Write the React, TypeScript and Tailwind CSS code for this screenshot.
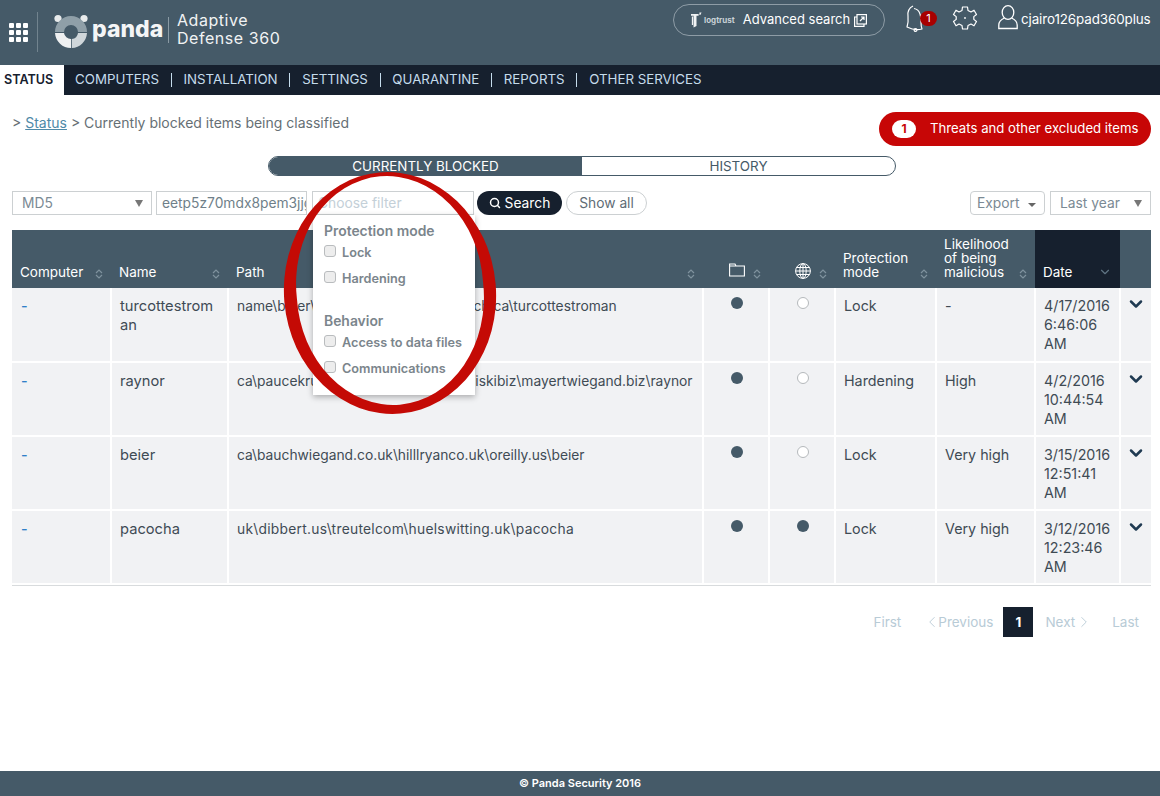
import { ChevronDown, ChevronLeft, ChevronRight, Search } from 'lucide-react'

const font = "font-['Inter','Liberation_Sans',sans-serif]"

const navItems = ['COMPUTERS', 'INSTALLATION', 'SETTINGS', 'QUARANTINE', 'REPORTS', 'OTHER SERVICES']

const rows = [
  { name: ['turcottestrom', 'an'], path: 'name\\beier\\hillryan.uk\\oreilly.us\\bosch.ca\\turcottestroman', pathClass: '', folder: true, web: false, mode: 'Lock', risk: '-', date: ['4/17/2016', '6:46:06', 'AM'] },
  { name: ['raynor'], path: 'ca\\paucekrunolfsdottir.us\\kuhlanbogiskibiz\\mayertwiegand.biz\\raynor', pathClass: '', folder: true, web: false, mode: 'Hardening', risk: 'High', date: ['4/2/2016', '10:44:54', 'AM'] },
  { name: ['beier'], path: 'ca\\bauchwiegand.co.uk\\hilllryanco.uk\\oreilly.us\\beier', pathClass: '', folder: true, web: false, mode: 'Lock', risk: 'Very high', date: ['3/15/2016', '12:51:41', 'AM'] },
  { name: ['pacocha'], path: 'uk\\dibbert.us\\treutelcom\\huelswitting.uk\\pacocha', pathClass: 'tracking-[0.27px]', folder: true, web: true, mode: 'Lock', risk: 'Very high', date: ['3/12/2016', '12:23:46', 'AM'] },
]

function SortIcon() {
  return (
    <svg width="8" height="10" viewBox="0 0 8 10" fill="none" stroke="#7f929e" strokeWidth="1.2" className="shrink-0">
      <path d="M1 4 L4 1 L7 4" />
      <path d="M1 6 L4 9 L7 6" />
    </svg>
  )
}

function PandaLogo() {
  return (
    <svg width="36" height="34" viewBox="0 0 36 34">
      <circle cx="5" cy="4.5" r="3.6" fill="#e8ebec" />
      <circle cx="31" cy="4.5" r="3.6" fill="#e8ebec" />
      <path d="M18 2 A16 16 0 0 1 34 18 H25 A7 7 0 0 0 11 18 H2 A16 16 0 0 1 18 2 Z" fill="#8f9fa8" />
      <path d="M2 19 H11 A7 7 0 0 0 18 25 V34 A16 16 0 0 1 2 19 Z" fill="#eef0f1" />
      <path d="M34 19 H25 A7 7 0 0 1 18.8 25 V34 A16 16 0 0 0 34 19 Z" fill="#cfd6da" />
    </svg>
  )
}

function LogTrust() {
  return (
    <span className="flex items-center gap-[2px]">
      <svg width="11" height="18" viewBox="0 0 13 18" fill="#f1f3f4">
        <path d="M0 2 H9 V4 H6.5 V16 L3 18 V4 H0 Z M1 5 H2.4 V15 H1 Z" />
        <path d="M10 0 H12.5 L11 3 H10 Z" />
      </svg>
      <span className="text-[8px] font-bold text-[#c9d1d6]">logtrust</span>
    </span>
  )
}

function GearIcon() {
  return (
    <svg width="26" height="26" viewBox="0 0 26 26" fill="none" stroke="white" strokeWidth="1.2" strokeLinejoin="round">
      <path d="M10.5 2 L15.5 2 L16 5.5 L19 7 L22 5.2 L24.5 9.5 L21.8 11.6 L21.8 14.4 L24.5 16.5 L22 20.8 L19 19 L16 20.5 L15.5 24 L10.5 24 L10 20.5 L7 19 L4 20.8 L1.5 16.5 L4.2 14.4 L4.2 11.6 L1.5 9.5 L4 5.2 L7 7 L10 5.5 Z" />
      <circle cx="13" cy="13" r="0.9" fill="white" stroke="none" />
    </svg>
  )
}

function UserIcon() {
  return (
    <svg width="20" height="25" viewBox="0 0 20 25" fill="none" stroke="white" strokeWidth="1.3">
      <ellipse cx="10" cy="7.5" rx="5.8" ry="6.8" />
      <path d="M6.5 13 C3 14.5 0.8 16.5 0.8 20 V23.5 H19.2 V20 C19.2 16.5 17 14.5 13.5 13" />
    </svg>
  )
}

function BellIcon() {
  return (
    <svg width="20" height="27" viewBox="0 0 20 27" fill="none" stroke="white" strokeWidth="1.2" strokeLinejoin="round">
      <path d="M7 1 C3 3 1.5 7 2 11 C2.4 15 2 19 1 22 C7 25 12 25 16 24 C14 20 16 14 14 9 C13 6 11 4 8 3.5" />
      <circle cx="9.5" cy="25" r="1.4" />
    </svg>
  )
}

function Dot({ on }: { on: boolean }) {
  return on ? (
    <span className="block h-3 w-3 rounded-full bg-[#455a68]" />
  ) : (
    <span className="block h-3 w-3 rounded-full border border-[#b5b9bc] bg-white" />
  )
}

function Check({ label }: { label: string }) {
  return (
    <div className="flex h-[26px] items-start gap-[6px]">
      <span className="mt-[-1px] h-3 w-3 shrink-0 rounded-[3px] border border-[#b9bcbe] bg-[#ededed]" />
      <span className="text-[12.7px] leading-[14px] font-semibold whitespace-nowrap text-[#7b858c]">{label}</span>
    </div>
  )
}

function SelectBox({ label, className }: { label: string; className: string }) {
  return (
    <div className={`flex h-6 items-center justify-between border border-[#ccd0d2] pr-2 pl-[9px] text-[13.8px] text-[#7b8a94] ${className}`}>
      <span>{label}</span>
      <span className="border-x-[4px] border-t-[7px] border-x-transparent border-t-[#777]" />
    </div>
  )
}

export default function App() {
  return (
    <div className={`relative flex min-h-[796px] flex-col overflow-hidden bg-white ${font}`}>
      {/* Header */}
      <header className="flex h-[65px] items-start bg-[#455a68] text-white">
        <div className="mt-[12px] flex h-[40px] w-[38px] items-center justify-center border-r border-[#71838e]">
          <div className="mr-[1px] grid grid-cols-3 gap-[2px]">
            {Array.from({ length: 9 }).map((_, i) => (
              <span key={i} className="h-[5px] w-[5px] rounded-[1px] bg-white" />
            ))}
          </div>
        </div>
        <div className="mt-[14px] ml-[15px]"><PandaLogo /></div>
        <span className="mt-[12px] ml-[3px] w-[71px] text-[23px] leading-[34px] font-extrabold whitespace-nowrap text-[#f4f5f6]">panda</span>
        <div className="mt-[17px] ml-[5px] h-[26px] w-px bg-[#8a9aa4]" />
        <div className="mt-[11px] ml-[8px] text-[16px] leading-[18px] tracking-[0.55px] text-[#f1f3f4]">
          <div>Adaptive</div>
          <div>Defense 360</div>
        </div>
        <div className="absolute top-[4px] left-[673px] flex h-[32px] w-[212px] items-center rounded-full border border-[#8e9ca6] pl-[17px]">
          <LogTrust />
          <span className="ml-2 text-[13px] whitespace-nowrap">Advanced search</span>
          <svg width="13" height="13" viewBox="0 0 13 13" fill="none" stroke="white" strokeWidth="1.2" className="ml-[4px] shrink-0">
            <rect x="3" y="0.6" width="9.4" height="9.4" />
            <path d="M3 3 H0.6 V12.4 H10 V10 M6 7 L10 3 M7 3 H10 V6" />
          </svg>
        </div>
        <div className="absolute top-[5px] left-[906px] h-7 w-8">
          <BellIcon />
          <span className="absolute top-[6px] left-[14px] flex h-[15px] w-[17px] items-center justify-center rounded-full bg-[#a80000] text-[11px]">1</span>
        </div>
        <div className="absolute top-[5px] left-[952px]"><GearIcon /></div>
        <div className="absolute top-[5px] left-[998px]"><UserIcon /></div>
        <span className="absolute top-[10px] left-[1021px] w-[131px] text-[13.4px] leading-[18px] tracking-[-0.1px] whitespace-nowrap">cjairo126pad360plus</span>
      </header>

      {/* Nav */}
      <nav className="flex h-[30px] items-center bg-[#16202e] text-[13.3px] text-[#c5dcec]">
        <span className="flex h-full w-[64px] items-center bg-white pl-1 text-[12.6px] font-semibold text-[#16202e]">STATUS</span>
        <div className="ml-[11px] flex items-center">
          {navItems.map((item, i) => (
            <span key={item} className="flex items-center">
              <span>{item}</span>
              {i < navItems.length - 1 && <span className="mx-[11.75px] h-[14px] w-px bg-[#c5dcec]" />}
            </span>
          ))}
        </div>
      </nav>

      {/* Breadcrumb + red pill */}
      <div className="flex items-start justify-between px-[9px] pt-[17px] pl-3">
        <p className="mt-[1px] text-[14px] leading-5 text-[#666f75]">
          &gt; <span className="text-[#4f8aa8] underline">Status</span> &gt; Currently blocked items being classified
        </p>
        <div className="flex h-[34px] w-[272px] items-center rounded-full bg-[#c70606] pl-[13px] text-[13.2px] text-white">
          <span className="flex h-[18px] w-6 items-center justify-center rounded-full bg-white text-xs font-bold text-[#c70606]">1</span>
          <span className="ml-[14px] whitespace-nowrap">Threats and other excluded items</span>
        </div>
      </div>

      {/* Tabs */}
      <div className="mt-[10px] ml-[268px] flex h-5 w-[628px] overflow-hidden rounded-full border border-[#455a68] text-[13.4px]">
        <div className="flex w-[313px] items-center justify-center bg-[#455a68] text-white">CURRENTLY BLOCKED</div>
        <div className="flex flex-1 items-center justify-center text-[#455a68]">HISTORY</div>
      </div>

      {/* Filters */}
      <div className="mt-[15px] flex items-center px-[9px] pl-3">
        <SelectBox label="MD5" className="w-[140px]" />
        <div className="ml-1 flex h-6 w-[151px] items-center overflow-hidden border border-[#ccd0d2] pl-[5px] text-[13.8px] whitespace-nowrap text-[#6f7f89]">
          eetp5z70mdx8pem3jjg
        </div>
        <div className="relative ml-[5px] h-6 w-[162px] border border-[#ccd0d2] pl-[5px] text-[13.8px] leading-[22px] text-[#c4d0d8]">
          Choose filter
          <div className="absolute top-[23px] left-0 z-10 h-[180px] w-[162px] bg-white pt-[8px] pl-[11px] shadow-[0_2px_6px_rgba(0,0,0,0.3)]">
            <div className="mb-[7px] text-[13.9px] leading-4 font-semibold text-[#7b858c]">Protection mode</div>
            <Check label="Lock" />
            <Check label="Hardening" />
            <div className="mt-[15px] mb-[7px] text-[13.9px] leading-4 font-semibold text-[#7b858c]">Behavior</div>
            <Check label="Access to data files" />
            <Check label="Communications" />
          </div>
        </div>
        <button className="ml-[3px] flex h-6 w-[85px] items-center justify-center gap-1 rounded-full bg-[#16202e] text-[13.8px] text-white">
          <Search size={12} strokeWidth={3} />
          Search
        </button>
        <button className="ml-1 h-6 w-[81px] rounded-full border border-[#ccd0d2] text-[13.8px] text-[#5f6c75]">Show all</button>
        <div className="ml-auto flex h-6 w-[75px] items-center justify-between rounded-[4px] border border-[#ccd0d2] pr-[8px] pl-[6px] text-[13.8px] text-[#7b8a94]">
          Export
          <span className="mt-[3px] border-x-[4px] border-t-[4px] border-x-transparent border-t-[#666]" />
        </div>
        <SelectBox label="Last year" className="ml-[5px] w-[101px]" />
      </div>

      {/* Table */}
      <div className="mt-[15px] px-[9px] pl-3">
        <table className="w-[1139px] table-fixed border-collapse text-[14.3px]">
          <thead>
            <tr className="h-[58px] bg-[#455a68] text-left text-[13.5px] leading-[14px] text-white">
              {[
                ['Computer', 'w-[99px]'],
                ['Name', 'w-[117px]'],
                ['Path', 'w-[475px]'],
              ].map(([label, w]) => (
                <th key={label} className={`${w} p-0 align-bottom font-normal`}>
                  <div className="mb-[9px] flex items-end justify-between pr-2 pl-2">
                    <span>{label}</span>
                    <SortIcon />
                  </div>
                </th>
              ))}
              <th className="w-[66px] p-0 align-bottom">
                <div className="mb-[9px] flex items-end justify-center gap-[8px] pl-[18px]">
                  <svg width="16" height="14" viewBox="0 0 16 14" fill="none" stroke="white" strokeWidth="1.1" className="mb-[2px]">
                    <path d="M0.6 1 H6 L7 3 H15.4 V13 H0.6 Z M0.6 3 H7" />
                  </svg>
                  <SortIcon />
                </div>
              </th>
              <th className="w-[66px] p-0 align-bottom">
                <div className="mb-[9px] flex items-end justify-center gap-[8px] pl-[17px]">
                  <svg width="16" height="16" viewBox="0 0 16 16" fill="none" stroke="white" strokeWidth="1">
                    <circle cx="8" cy="8" r="7.4" />
                    <ellipse cx="8" cy="8" rx="3.2" ry="7.4" />
                    <path d="M8 0.6 V15.4 M0.6 8 H15.4 M1.8 4.5 H14.2 M1.8 11.5 H14.2" />
                  </svg>
                  <SortIcon />
                </div>
              </th>
              <th className="w-[101px] p-0 align-bottom font-normal">
                <div className="mb-[9px] flex items-end justify-between pr-2 pl-2">
                  <span>Protection<br />mode</span>
                  <SortIcon />
                </div>
              </th>
              <th className="w-[99px] p-0 align-bottom font-normal">
                <div className="mb-[9px] flex items-end justify-between pr-2 pl-2">
                  <span>Likelihood<br />of being<br />malicious</span>
                  <SortIcon />
                </div>
              </th>
              <th className="w-[85px] bg-[#16202e] p-0 align-bottom font-normal">
                <div className="mb-[9px] flex items-end justify-between pr-2 pl-2">
                  <span>Date</span>
                  <ChevronDown size={14} className="text-[#5f7483]" />
                </div>
              </th>
              <th className="w-[31px] p-0" />
            </tr>
          </thead>
          <tbody className="leading-[19px] text-[#3f4b54]">
            {rows.map((r) => (
              <tr key={r.path} className="h-[74px] border-b-2 border-[#fff] bg-[#f1f2f4] align-top">
                <td className="pt-[8px] pl-[9px] font-medium text-[#2f80c8]">-</td>
                <td className="border-l-2 border-white pt-[9px] pl-2 text-[14.7px]">
                  {r.name.map((n) => <div key={n}>{n}</div>)}
                </td>
                <td className={`border-l-2 border-white pt-[9px] pl-2 text-[13.8px] whitespace-nowrap ${r.pathClass}`}>{r.path}</td>
                <td className="border-l-2 border-white pt-[9px]"><div className="flex justify-center pl-[1px]"><Dot on={r.folder} /></div></td>
                <td className="border-l-2 border-white pt-[9px]"><div className="flex justify-center pl-[1px]"><Dot on={r.web} /></div></td>
                <td className="border-l-2 border-white pt-[8px] pl-2">{r.mode}</td>
                <td className="border-l-2 border-white pt-[8px] pl-2">{r.risk}</td>
                <td className="border-l-2 border-white pt-[8px] pl-2">
                  {r.date.map((d) => <div key={d}>{d}</div>)}
                </td>
                <td className="border-l-2 border-white pt-[6px]">
                  <ChevronDown size={20} strokeWidth={3} className="ml-[5px] text-[#1f3a52]" />
                </td>
              </tr>
            ))}
          </tbody>
        </table>
        <div className="h-px w-[1139px] bg-[#d8dbdd]" />
      </div>

      {/* Pagination */}
      <div className="mt-[21px] flex items-center justify-end pr-[21px] text-[13.5px] text-[#b8cbd6]">
        <span>First</span>
        <span className="ml-[22px] flex items-center"><ChevronLeft size={18} strokeWidth={1.2} className="-mr-[3px]" />Previous</span>
        <span className="ml-[10px] flex h-[30px] w-[30px] items-center justify-center bg-[#16202e] font-bold text-white">1</span>
        <span className="ml-[12px] flex items-center">Next<ChevronRight size={18} strokeWidth={1.2} /></span>
        <span className="ml-[19px]">Last</span>
      </div>

      {/* Footer */}
      <footer className="mt-auto flex h-[25px] items-center justify-center bg-[#455a68] text-[11px] font-semibold text-white">
        © Panda Security 2016
      </footer>

      {/* Hand drawn highlight, thinner at the top */}
      <svg width="220" height="250" viewBox="0 0 220 250" className="pointer-events-none absolute top-[168px] left-[281px] z-20">
        <path
          fillRule="evenodd"
          fill="#c40a05"
          d="M3.4 134.2 A106 121 -5 1 0 214.6 115.8 A106 121 -5 1 0 3.4 134.2 Z M15.9 130.6 A93.5 111 -5 1 0 202.1 114.4 A93.5 111 -5 1 0 15.9 130.6 Z"
        />
      </svg>
    </div>
  )
}
